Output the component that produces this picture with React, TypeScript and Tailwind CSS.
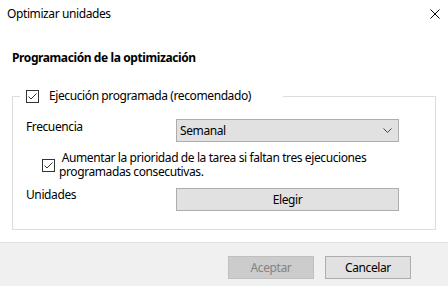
import React from 'react';

const font = { fontFamily: '"Noto Sans", "Open Sans", Arial, sans-serif' };

const CheckBox = () => (
  <span className="inline-flex h-[13px] w-[13px] shrink-0 items-center justify-center border border-[#333333] bg-white">
    <svg width="11" height="11" viewBox="0 0 11 11" fill="none">
      <path d="M1.5 5.5 L4 8 L9.5 2.5" stroke="#333333" strokeWidth="1" />
    </svg>
  </span>
);

const Chevron = () => (
  <svg width="9" height="5" viewBox="0 0 9 5" fill="none">
    <path d="M0.5 0.5 L4.5 4.5 L8.5 0.5" stroke="#444444" strokeWidth="1" />
  </svg>
);

export default function App() {
  return (
    <div
      className="flex h-[286px] w-[448px] flex-col overflow-hidden bg-white text-[12px] leading-[16px] tracking-[-0.4px] text-black"
      style={font}
    >
      <div className="flex-1">
        {/* Title bar */}
        <div className="flex h-[28px] items-center justify-between pl-[7px] pr-[8px]">
          <span>Optimizar unidades</span>
          <svg width="10" height="10" viewBox="0 0 10 10" fill="none">
            <path d="M0.5 0.5 L9.5 9.5 M9.5 0.5 L0.5 9.5" stroke="#000" strokeWidth="1" />
          </svg>
        </div>

        <h2 className="mt-[22px] pl-[12px] font-bold">Programación de la optimización</h2>

        <fieldset className="mx-[12px] mt-[23px] w-[424px] border border-[#dcdcdc] pb-[18px]">
          <legend className="ml-[7px] w-[263px]">
            <div className="flex h-[14px] items-center pl-[6px]">
              <CheckBox />
              <span className="ml-[10px]">Ejecución programada (recomendado)</span>
            </div>
          </legend>

          <div className="mt-[16px] flex items-start pl-[13px]">
            <span className="w-[150px]">Frecuencia</span>
            <div className="flex h-[23px] w-[223px] items-center justify-between border border-[#adadad] bg-[#e1e1e1] pl-[3px] pr-[6px]">
              <span>Semanal</span>
              <Chevron />
            </div>
          </div>

          <div className="mt-[9px] flex items-center pl-[29px]">
            <CheckBox />
            <div className="ml-[4px] flex flex-col leading-[14px]">
              <span>&nbsp;Aumentar la prioridad de la tarea si faltan tres ejecuciones</span>
              <span>programadas consecutivas.</span>
            </div>
          </div>

          <div className="mt-[8px] flex items-start pl-[13px]">
            <span className="w-[150px]">Unidades</span>
            <div className="mt-[1px] flex h-[23px] w-[223px] items-center justify-center border border-[#adadad] bg-[#e1e1e1]">
              Elegir
            </div>
          </div>
        </fieldset>
      </div>

      {/* Footer */}
      <div className="flex h-[44px] justify-end gap-[11px] border-t border-[#dfdfdf] bg-[#f0f0f0] pr-[37px] pt-[13px]">
        <div className="flex h-[23px] w-[86px] items-center justify-center border border-[#bfbfbf] bg-[#cccccc] text-[#838383]">
          Aceptar
        </div>
        <div className="flex h-[23px] w-[86px] items-center justify-center border border-[#adadad] bg-[#e1e1e1]">
          Cancelar
        </div>
      </div>
    </div>
  );
}
